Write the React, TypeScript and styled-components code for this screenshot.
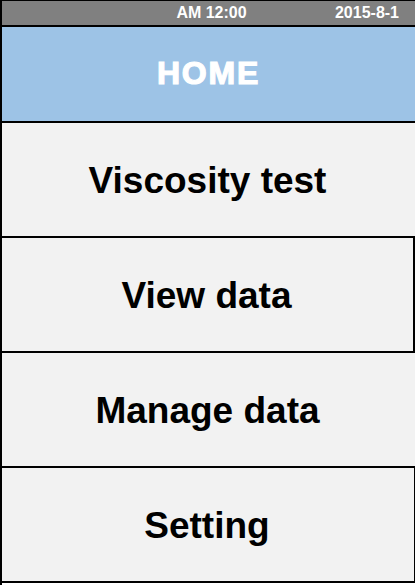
import React from "react";
import styled, { createGlobalStyle } from "styled-components";

const GlobalStyle = createGlobalStyle`
  html, body {
    margin: 0;
    padding: 0;
    background: #ffffff;
  }
  body {
    font-family: "Liberation Sans", Arial, sans-serif;
  }
`;

const Screen = styled.div`
  width: 415px;
  height: 585px;
  display: flex;
  flex-direction: column;
  box-sizing: border-box;
  border-left: 2px solid #000;
  overflow: hidden;
`;

const StatusBar = styled.div`
  height: 24px;
  flex: 0 0 auto;
  border-top: 1px solid #000;
  border-bottom: 2px solid #000;
  background: #808080;
  display: grid;
  grid-template-columns: 1fr auto 1fr;
  align-items: center;
  color: #fff;
  font-weight: bold;
  font-size: 16px;
`;

const Clock = styled.span`
  grid-column: 2;
  padding-left: 6px;
`;

const DateText = styled.span`
  grid-column: 3;
  justify-self: end;
  padding-right: 16px;
`;

const Header = styled.div`
  height: 96px;
  flex: 0 0 auto;
  background: #9dc3e6;
  border-bottom: 2px solid #000;
  display: flex;
  align-items: center;
  justify-content: center;
  color: #fff;
  font-weight: bold;
  font-size: 32px;
  letter-spacing: 1.8px;
  -webkit-text-stroke: 1.2px #fff;
  padding-bottom: 2px;
  box-sizing: border-box;
`;

const MenuItem = styled.div<{ $edge?: number }>`
  height: 115px;
  flex: 0 0 auto;
  box-sizing: border-box;
  background: #f2f2f2;
  border-bottom: 2px solid #000;
  border-right: ${(p) => (p.$edge ? `${p.$edge}px solid #000` : "none")};
  display: flex;
  align-items: center;
  justify-content: center;
  color: #000;
  font-weight: bold;
  font-size: 37px;
  padding-top: 2px;
  padding-right: 2px;
`;

const items: { label: string; edge?: number }[] = [
  { label: "Viscosity test" },
  { label: "View data", edge: 2 },
  { label: "Manage data" },
  { label: "Setting", edge: 1 },
];

export default function App() {
  return (
    <>
      <GlobalStyle />
      <Screen>
        <StatusBar>
          <Clock>AM 12:00</Clock>
          <DateText>2015-8-1</DateText>
        </StatusBar>
        <Header>HOME</Header>
        {items.map((it) => (
          <MenuItem key={it.label} $edge={it.edge}>
            {it.label}
          </MenuItem>
        ))}
      </Screen>
    </>
  );
}
